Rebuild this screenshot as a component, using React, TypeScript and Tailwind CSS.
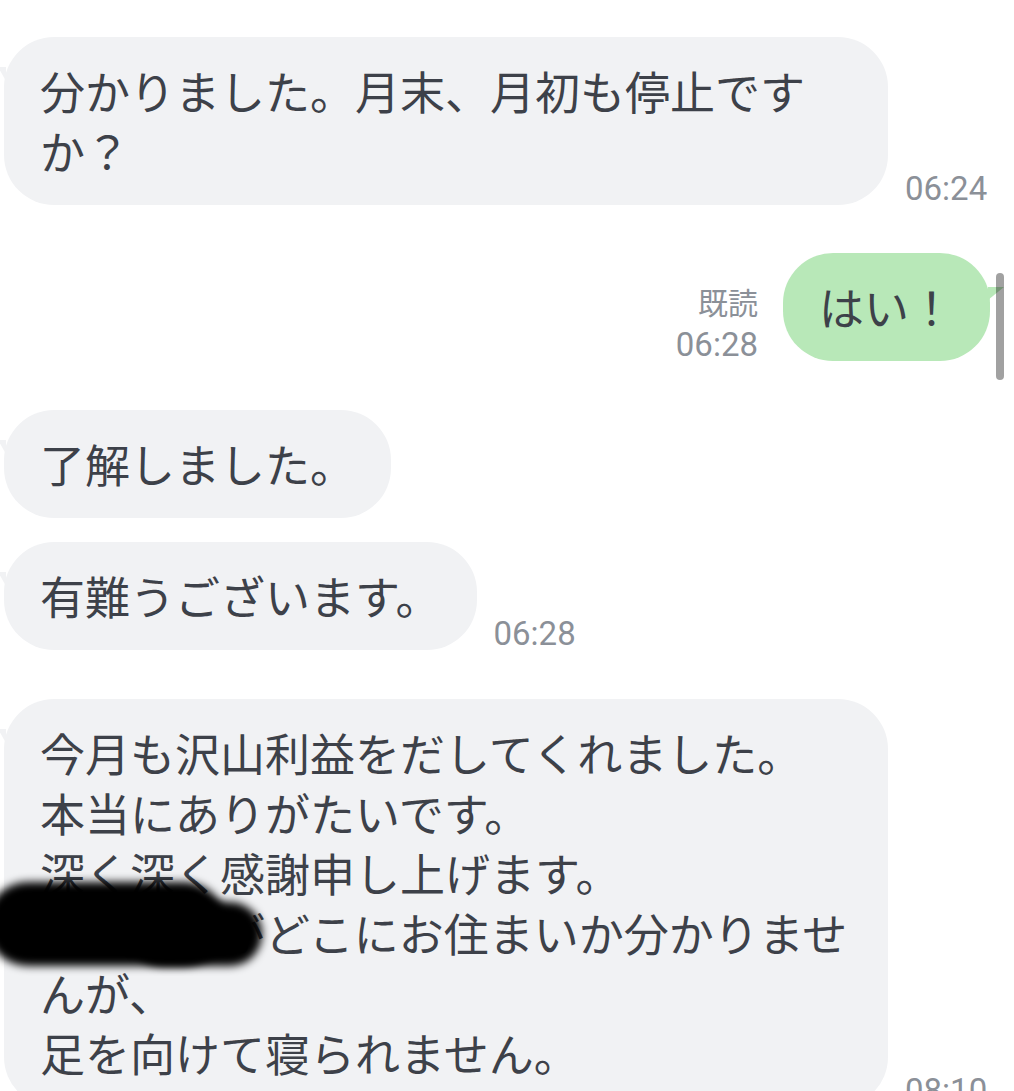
import React from "react";

const jp = "[font-family:'Noto_Sans_CJK_JP','Noto_Sans',sans-serif]";
const num = "[font-family:Roboto,'Liberation_Sans',sans-serif]";

function LeftBubble({ lines }: { lines: string[] }) {
  return (
    <div className="relative ml-[4px] max-w-[884px] rounded-[50px] bg-[#f1f2f4] px-[36px] py-[24px] text-[45px] leading-[60px] text-[#3d4149]">
      <div className="absolute -left-[6px] top-[30px] h-[14px] w-[8px] bg-[#f1f2f4] [clip-path:polygon(0_0,100%_0,100%_100%)]" />
      {lines.map((l, i) => (
        <div key={i}>{l}</div>
      ))}
    </div>
  );
}

function Time({ t }: { t: string }) {
  return <div className={`${num} ml-[17px] shrink-0 text-[33px] leading-[33px] text-[#8b9098]`}>{t}</div>;
}

export default function App() {
  return (
    <div className={`${jp} relative h-[1091px] w-[1014px] overflow-hidden bg-white`}>
      <div className="flex flex-col pr-[24px] pt-[37px]">
        <div className="flex items-end">
          <LeftBubble lines={["分かりました。月末、月初も停止ですか？"]} />
          <Time t="06:24" />
        </div>

        <div className="mt-[48px] flex items-end justify-end">
          <div className="mr-[25px] flex flex-col items-end text-[#8b9098]">
            <div className="mb-[9px] text-[30px] leading-[36px]">既読</div>
            <div className={`${num} text-[33px] leading-[33px]`}>06:28</div>
          </div>
          <div className="relative rounded-[50px] bg-[#b8e8b8] px-[36px] py-[24px] text-[45px] leading-[60px] text-[#3d4149]">
            <div className="absolute -right-[14px] top-[34px] h-[13px] w-[16px] bg-[#b8e8b8] [clip-path:polygon(0_0,100%_0,0_100%)]" />
            はい！
          </div>
        </div>

        <div className="mt-[49px] flex items-end">
          <LeftBubble lines={["了解しました。"]} />
        </div>

        <div className="mt-[24px] flex items-end">
          <LeftBubble lines={["有難うございます。"]} />
          <Time t="06:28" />
        </div>

        <div className="mt-[49px] flex items-end">
          <LeftBubble
            lines={[
              "今月も沢山利益をだしてくれました。",
              "本当にありがたいです。",
              "深く深く感謝申し上げます。",
              "〇〇さんがどこにお住まいか分かりませんが、",
              "足を向けて寝られません。",
            ]}
          />
          <Time t="08:10" />
        </div>
      </div>

      {/* redaction scribble */}
      <div className="absolute left-[-14px] top-[882px] h-[84px] w-[240px] rounded-[42px] bg-black blur-[4px]" />
      <div className="absolute left-[130px] top-[902px] h-[64px] w-[132px] rounded-[32px] bg-black blur-[4px]" />

      {/* scrollbar */}
      <div className="absolute left-[996px] top-[273px] h-[107px] w-[8px] rounded-full bg-black/[0.37]" />
    </div>
  );
}
